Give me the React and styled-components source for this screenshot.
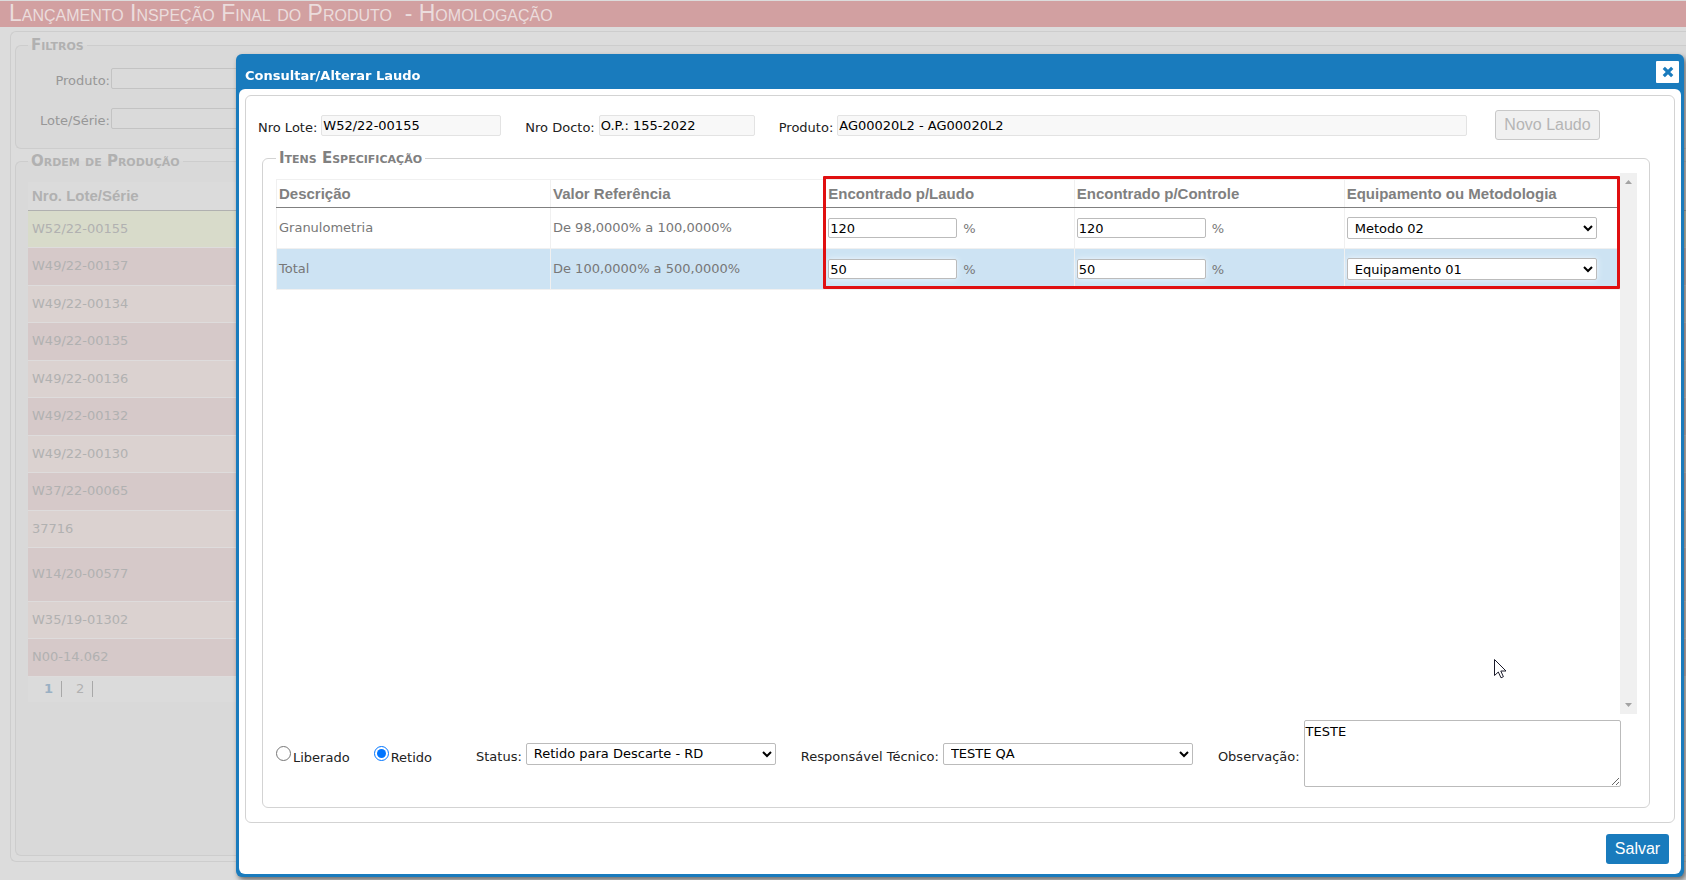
import React, { useState } from "react";
import styled, { createGlobalStyle } from "styled-components";

const ordens = [
  { lote: "W52/22-00155", selecionado: true },
  { lote: "W49/22-00137" },
  { lote: "W49/22-00134" },
  { lote: "W49/22-00135" },
  { lote: "W49/22-00136" },
  { lote: "W49/22-00132" },
  { lote: "W49/22-00130" },
  { lote: "W37/22-00065" },
  { lote: "37716" },
  { lote: "W14/20-00577", alto: true },
  { lote: "W35/19-01302" },
  { lote: "N00-14.062" },
];

const itensIniciais = [
  { descricao: "Granulometria", valor: "De 98,0000% a 100,0000%", laudo: "120", controle: "120", metodo: "Metodo 02" },
  { descricao: "Total", valor: "De 100,0000% a 500,0000%", laudo: "50", controle: "50", metodo: "Equipamento 01" },
];

const App = () => {
  const [itens, setItens] = useState(itensIniciais);
  const [situacao, setSituacao] = useState("retido");
  const [observacao, setObservacao] = useState("TESTE");

  const alterarItem = (index, campo, valor) => {
    setItens(itens.map((item, i) => (i === index ? { ...item, [campo]: valor } : item)));
  };

  return (
    <Page>
      <GlobalStyle />
      <PageTitle>Lançamento Inspeção Final do Produto &nbsp;- Homologação</PageTitle>

      <PagePanel>
        <FilterSet>
          <PageLegend>Filtros</PageLegend>
          <FilterRow>
            <FilterLabel htmlFor="filtro-produto">Produto:</FilterLabel>
            <FilterInput id="filtro-produto" />
          </FilterRow>
          <FilterRow>
            <FilterLabel htmlFor="filtro-lote">Lote/Série:</FilterLabel>
            <FilterInput id="filtro-lote" />
          </FilterRow>
        </FilterSet>

        <OrderSet>
          <PageLegend>Ordem de Produção</PageLegend>
          <OrderTable>
            <thead>
              <tr>
                <th>Nro. Lote/Série</th>
              </tr>
            </thead>
            <tbody>
              {ordens.map((ordem) => (
                <OrderRow key={ordem.lote} $selected={ordem.selecionado} $tall={ordem.alto}>
                  <td>{ordem.lote}</td>
                </OrderRow>
              ))}
            </tbody>
          </OrderTable>
          <Pager>
            <PageLink href="#1" $current>1</PageLink>
            <PageLink href="#2">2</PageLink>
          </Pager>
        </OrderSet>
      </PagePanel>

      <Overlay>
        <Modal role="dialog" aria-labelledby="modal-titulo">
          <ModalHeader>
            <ModalTitle id="modal-titulo">Consultar/Alterar Laudo</ModalTitle>
            <CloseButton type="button" aria-label="Fechar">
              <svg width="12" height="12" viewBox="0 0 12 12">
                <path d="M1.8 1.8L10.2 10.2M10.2 1.8L1.8 10.2" stroke="#197bbd" strokeWidth="3.2" fill="none" />
              </svg>
            </CloseButton>
          </ModalHeader>

          <ModalBody>
            <ModalPanel>
              <TopRow>
                <Field>
                  <Label htmlFor="nro-lote">Nro Lote:</Label>
                  <ReadInput id="nro-lote" $width="180px" readOnly value="W52/22-00155" />
                </Field>
                <Field>
                  <Label htmlFor="nro-docto">Nro Docto:</Label>
                  <ReadInput id="nro-docto" $width="156px" readOnly value="O.P.: 155-2022" />
                </Field>
                <Field $grow>
                  <Label htmlFor="produto">Produto:</Label>
                  <ReadInput id="produto" $width="100%" readOnly value="AG00020L2 - AG00020L2" />
                </Field>
                <NewButton type="button" disabled>Novo Laudo</NewButton>
              </TopRow>

              <ItemSet>
                <ItemLegend>Itens Especificação</ItemLegend>
                <ScrollArea>
                  <TableArea>
                    <ItemTable>
                      <colgroup>
                        <Col $width="20.4%" />
                        <Col $width="20.5%" />
                        <Col $width="18.5%" />
                        <Col $width="20.1%" />
                        <Col $width="20.5%" />
                      </colgroup>
                      <thead>
                        <tr>
                          <th>Descrição</th>
                          <th>Valor Referência</th>
                          <th>Encontrado p/Laudo</th>
                          <th>Encontrado p/Controle</th>
                          <th>Equipamento ou Metodologia</th>
                        </tr>
                      </thead>
                      <tbody>
                        {itens.map((item, index) => (
                          <ItemRow key={item.descricao} $highlight={index % 2 === 1}>
                            <td>{item.descricao}</td>
                            <td>{item.valor}</td>
                            <td>
                              <ValueInput
                                aria-label={`Encontrado p/Laudo ${item.descricao}`}
                                value={item.laudo}
                                onChange={(e) => alterarItem(index, "laudo", e.target.value)}
                              />
                              %
                            </td>
                            <td>
                              <ValueInput
                                aria-label={`Encontrado p/Controle ${item.descricao}`}
                                value={item.controle}
                                onChange={(e) => alterarItem(index, "controle", e.target.value)}
                              />
                              %
                            </td>
                            <td>
                              <Select
                                aria-label={`Equipamento ou Metodologia ${item.descricao}`}
                                value={item.metodo}
                                onChange={(e) => alterarItem(index, "metodo", e.target.value)}
                              >
                                <option>Metodo 02</option>
                                <option>Equipamento 01</option>
                              </Select>
                            </td>
                          </ItemRow>
                        ))}
                      </tbody>
                    </ItemTable>
                    <Marker />
                  </TableArea>
                  <ScrollBar>
                    <svg width="7" height="4" viewBox="0 0 7 4"><path d="M0 4L3.5 0L7 4Z" fill="#a3a3a3" /></svg>
                    <svg width="7" height="4" viewBox="0 0 7 4"><path d="M0 0L3.5 4L7 0Z" fill="#a3a3a3" /></svg>
                  </ScrollBar>
                </ScrollArea>

                <BottomRow>
                  <RadioGroup>
                    <RadioLabel>
                      <input
                        type="radio"
                        name="situacao"
                        checked={situacao === "liberado"}
                        onChange={() => setSituacao("liberado")}
                      />
                      <span>Liberado</span>
                    </RadioLabel>
                    <RadioLabel>
                      <input
                        type="radio"
                        name="situacao"
                        checked={situacao === "retido"}
                        onChange={() => setSituacao("retido")}
                      />
                      <span>Retido</span>
                    </RadioLabel>
                  </RadioGroup>
                  <Field>
                    <Label htmlFor="status">Status:</Label>
                    <Select id="status">
                      <option>Retido para Descarte - RD</option>
                    </Select>
                  </Field>
                  <Field>
                    <Label htmlFor="responsavel">Responsável Técnico:</Label>
                    <Select id="responsavel">
                      <option>TESTE QA</option>
                    </Select>
                  </Field>
                  <Field $grow>
                    <Label htmlFor="observacao">Observação:</Label>
                    <TextArea
                      id="observacao"
                      value={observacao}
                      onChange={(e) => setObservacao(e.target.value)}
                    />
                  </Field>
                </BottomRow>
              </ItemSet>
            </ModalPanel>

            <ModalFooter>
              <SaveButton type="button">Salvar</SaveButton>
            </ModalFooter>
          </ModalBody>
        </Modal>
      </Overlay>

      <Cursor width="13" height="20" viewBox="0 0 13 20">
        <path
          d="M0.5 0.5V16.5L4.3 13L7 18.8L9.4 17.7L6.8 12H12Z"
          fill="#fff"
          stroke="#1b1b2b"
          strokeWidth="1"
        />
      </Cursor>
    </Page>
  );
};

// Styled Components
const GlobalStyle = createGlobalStyle`
  *, *::before, *::after {
    box-sizing: border-box;
  }

  body {
    margin: 0;
    background: #dcdcdc;
    font-family: Verdana, "DejaVu Sans", sans-serif;
    font-size: 13px;
    line-height: 16px;
  }

  input, select, textarea {
    font-family: inherit;
    font-size: inherit;
    color: #000;
  }
`;

const Page = styled.div`
  display: flex;
  flex-direction: column;
  min-height: 100vh;
  padding: 1px 0 18px;
  overflow: hidden;
`;

const PageTitle = styled.h1`
  margin: 0 0 4px;
  padding: 0 9px;
  height: 26px;
  background: #d2a0a1;
  color: #ebdcdc;
  font-family: Arial, "Liberation Sans", sans-serif;
  font-size: 23px;
  font-weight: 400;
  font-variant: small-caps;
  line-height: 24px;
`;

const PagePanel = styled.div`
  flex: 1;
  display: flex;
  flex-direction: column;
  margin-left: 10px;
  padding: 5px 0 5px 4px;
  border: 1px solid #cdcdcd;
  border-right: 0;
  border-radius: 6px 0 0 6px;
`;

const PageSet = styled.fieldset`
  margin: 0;
  min-width: 0;
  border: 1px solid #cdcdcd;
  border-right: 0;
  border-radius: 6px 0 0 6px;
  background: #d9d9d9;
`;

const FilterSet = styled(PageSet)`
  display: flex;
  flex-direction: column;
  gap: 19px;
  height: 112px;
  padding: 15px 12px 19px;
`;

const OrderSet = styled(PageSet)`
  flex: 1;
  margin-top: 4px;
  padding: 13px 0 12px 12px;
`;

const PageLegend = styled.legend`
  padding: 0 3px;
  color: #b1b1b1;
  font-size: 15px;
  font-weight: 700;
  font-variant: small-caps;
`;

const FilterRow = styled.div`
  display: flex;
  align-items: flex-end;
  gap: 1px;
`;

const FilterLabel = styled.label`
  width: 82px;
  color: #979797;
  text-align: right;
  white-space: nowrap;
`;

const FilterInput = styled.input`
  width: 240px;
  height: 21px;
  border: 1px solid #c3c3c3;
  border-radius: 2px;
  background: #dadada;
`;

const OrderTable = styled.table`
  width: 100%;
  border-collapse: collapse;
  color: #b1b1b1;

  th {
    height: 28px;
    padding: 0 4px;
    border-bottom: 1px solid #b0b0b0;
    background: #dbdbdb;
    font-family: Arial, "Liberation Sans", sans-serif;
    font-size: 15px;
    text-align: left;
  }

  td {
    padding: 0 4px;
    border-bottom: 1px solid #dedcdc;
  }
`;

const OrderRow = styled.tr`
  height: ${({ $tall }) => ($tall ? "54px" : "37px")};
  background: ${({ $selected }) => ($selected ? "#d8dbca" : "#dbd2d0")};

  &:nth-child(even) {
    height: ${({ $tall }) => ($tall ? "54px" : "38px")};
    background: #d6c9c9;
  }
`;

const Pager = styled.nav`
  display: flex;
  align-items: center;
  height: 25px;
  padding-left: 2px;
  background: #dbdbdb;
`;

const PageLink = styled.a`
  padding: 0 8px 0 14px;
  border-right: 1px solid #a8a8a8;
  color: ${({ $current }) => ($current ? "#9ab0c3" : "#b1b1b1")};
  font-weight: ${({ $current }) => ($current ? 700 : 400)};
  text-decoration: none;
`;

const Overlay = styled.div`
  position: fixed;
  inset: 0;
  display: flex;
  padding: 54px 2px 3px 236px;
`;

const Modal = styled.section`
  flex: 1;
  display: flex;
  flex-direction: column;
  min-width: 0;
  padding: 0 3px 3px;
  border-radius: 6px;
  background: #197bbd;
  box-shadow: 2px 3px 5px rgba(0, 0, 0, 0.5);
`;

const ModalHeader = styled.header`
  display: flex;
  align-items: center;
  justify-content: space-between;
  height: 35px;
  padding: 0 2px 0 6px;
`;

const ModalTitle = styled.h2`
  margin: 0;
  padding-top: 8px;
  color: #fff;
  font-size: 13px;
  font-weight: 700;
`;

const CloseButton = styled.button`
  display: flex;
  align-items: center;
  justify-content: center;
  width: 23px;
  height: 22px;
  padding: 0;
  border: 0;
  border-radius: 1px;
  background: #fff;
`;

const ModalBody = styled.div`
  flex: 1;
  display: flex;
  flex-direction: column;
  padding: 6px;
  border-radius: 6px;
  background: #fff;
`;

const ModalPanel = styled.div`
  flex: 1;
  display: flex;
  flex-direction: column;
  padding: 14px 24px 14px 16px;
  border: 1px solid #d3d3d3;
  border-radius: 6px;
`;

const TopRow = styled.div`
  display: flex;
  align-items: center;
  gap: 24px;
  height: 30px;
  padding-right: 50px;
  margin-left: -4px;
`;

const Field = styled.div`
  display: flex;
  align-items: center;
  gap: 4px;
  flex: ${({ $grow }) => ($grow ? "1" : "none")};
`;

const Label = styled.label`
  padding-top: 6px;
  color: #222;
  white-space: nowrap;
`;

const ReadInput = styled.input`
  width: ${({ $width }) => $width};
  height: 21px;
  padding: 0 1px;
  border: 1px solid #e3e3e3;
  border-radius: 2px;
  background: #f8f8f8;
`;

const NewButton = styled.button`
  width: 105px;
  height: 30px;
  margin-left: 4px;
  padding: 0;
  border: 1px solid #c8c8c8;
  border-radius: 3px;
  background: #f0f0f0;
  color: #b5b5b5;
  font-family: Arial, "Liberation Sans", sans-serif;
  font-size: 16px;
`;

const ItemSet = styled.fieldset`
  flex: 1;
  display: flex;
  flex-direction: column;
  min-width: 0;
  margin: 10px 0 0;
  padding: 7px 12px 20px 13px;
  border: 1px solid #d3d3d3;
  border-radius: 6px;
`;

const ItemLegend = styled(PageLegend)`
  color: #808080;
`;

const ScrollArea = styled.div`
  flex: 1;
  display: flex;
`;

const TableArea = styled.div`
  position: relative;
  flex: 1;
  padding-top: 6px;
`;

const ItemTable = styled.table`
  width: 100%;
  table-layout: fixed;
  border-collapse: collapse;
  color: #777;

  th, td {
    padding: 0 2px;
    border: 1px solid #f0f0f0;
    text-align: left;
    white-space: nowrap;
  }

  th {
    height: 28px;
    border-bottom-color: #808080;
    color: #808080;
    font-family: Arial, "Liberation Sans", sans-serif;
    font-size: 15px;
  }
`;

const Col = styled.col`
  width: ${({ $width }) => $width};
`;

const ItemRow = styled.tr`
  height: 41px;
  background: ${({ $highlight }) => ($highlight ? "#cde3f3" : "#fff")};

  input, select {
    box-shadow: ${({ $highlight }) => ($highlight ? "0 0 6px #eef6fc" : "none")};
  }
`;

const ValueInput = styled.input`
  width: 129px;
  height: 20px;
  margin-right: 6px;
  padding: 0 1px;
  border: 1px solid #bbb;
  border-radius: 2px;
  background: #fff;
`;

const Select = styled.select`
  width: 250px;
  height: 22px;
  padding: 0 3px;
  border: 1px solid #bbb;
  border-radius: 2px;
  background-color: #fff;
`;

// moldura vermelha sobre as colunas editáveis
const Marker = styled.div`
  position: absolute;
  top: 3px;
  left: 40.7%;
  right: 0;
  height: 113px;
  border: 3px solid #e00f10;
  border-radius: 1px;
  pointer-events: none;
`;

const ScrollBar = styled.div`
  display: flex;
  flex-direction: column;
  align-items: center;
  justify-content: space-between;
  width: 17px;
  padding: 7px 0;
  background: #f0f0f0;
`;

const BottomRow = styled.div`
  display: flex;
  align-items: center;
  gap: 25px;
  padding: 6px 16px 0 0;
`;

const RadioGroup = styled.div`
  display: flex;
  gap: 24px;
  margin-right: 19px;
`;

const RadioLabel = styled.label`
  display: flex;
  align-items: center;
  gap: 2px;
  color: #222;

  input {
    width: 15px;
    height: 15px;
    margin: 0;
  }

  span {
    padding-top: 8px;
  }
`;

const TextArea = styled.textarea`
  flex: 1;
  min-width: 0;
  height: 67px;
  padding: 3px 1px;
  border: 1px solid #bbb;
  border-radius: 2px;
  background: #fff;
  line-height: 16px;
`;

const ModalFooter = styled.footer`
  display: flex;
  justify-content: flex-end;
  padding: 11px 6px 4px;
`;

const SaveButton = styled.button`
  width: 63px;
  height: 30px;
  padding: 0;
  border: 0;
  border-radius: 3px;
  background: #197bbd;
  color: #fff;
  font-family: Arial, "Liberation Sans", sans-serif;
  font-size: 16px;
`;

const Cursor = styled.svg`
  position: fixed;
  top: 659px;
  left: 1494px;
  pointer-events: none;
`;

export default App;
